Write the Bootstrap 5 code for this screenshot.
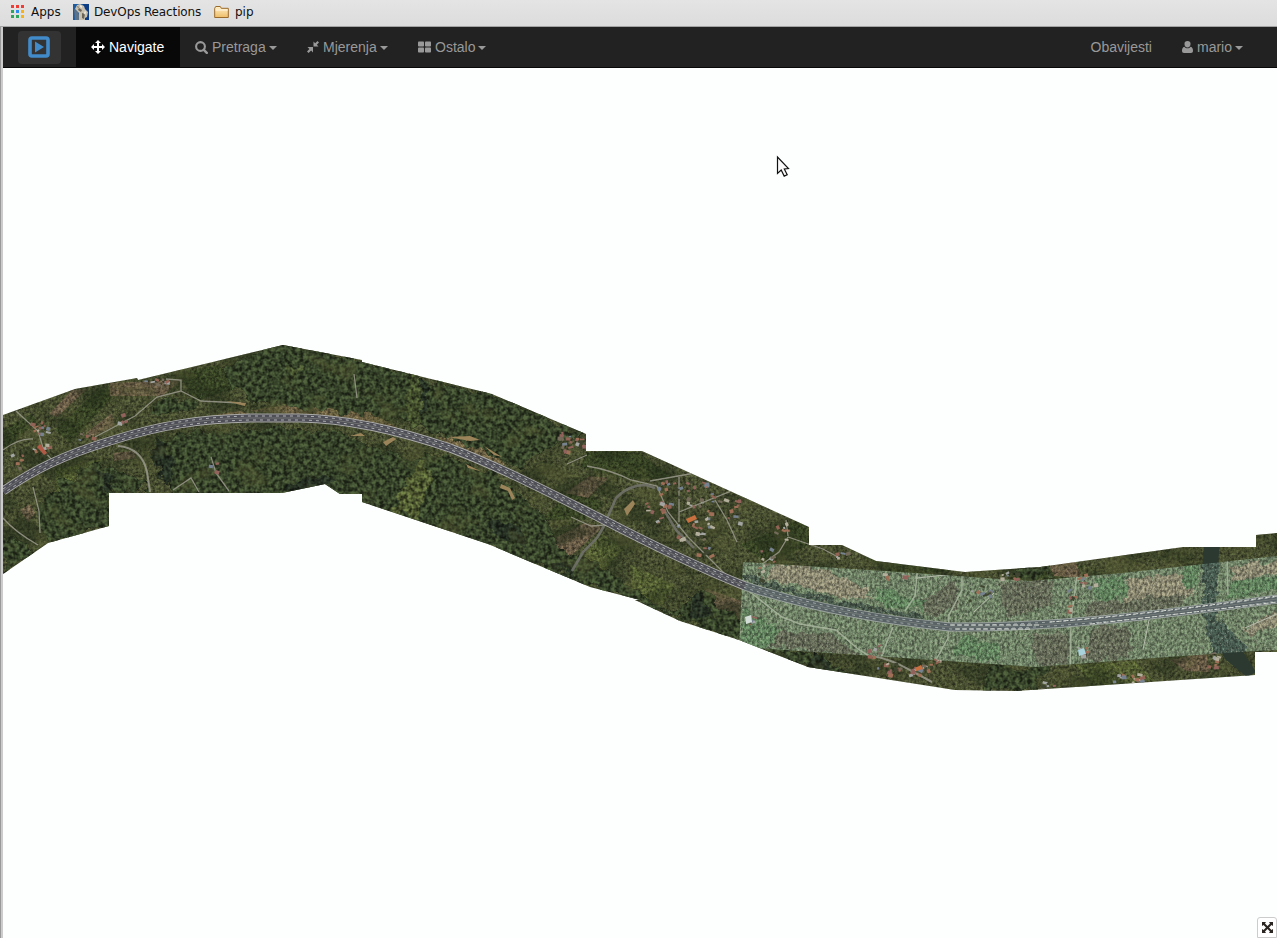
<!DOCTYPE html>
<html lang="hr">
<head>
<meta charset="utf-8">
<meta name="viewport" content="width=device-width, initial-scale=1">
<title>Navigate</title>
<link rel="stylesheet" href="https://cdn.jsdelivr.net/npm/bootstrap@5.3.0/dist/css/bootstrap.min.css">
<style>
body{font-family:"Liberation Sans",Arial,sans-serif;font-size:14px;line-height:20px;background:#fdfefe}
svg{display:block;flex:none}
.bookmarks{height:27px;background:linear-gradient(#e4e4e4,#dcdcdc);border-bottom:1px solid #a3a3a3;font:12px/24px "DejaVu Sans",sans-serif;color:#111;padding-left:10px}
.bookmarks a{color:inherit;text-decoration:none;height:24px}
.bm-apps{width:63px;gap:7px}
.bm-devops{width:141px;gap:5px;letter-spacing:-.13px}
.bm-pip{gap:5px}
.page-frame{padding-left:3px;background:linear-gradient(90deg,#999 1px,#ccc 1px)}
.topbar{height:41px;background:#222;border-bottom:1px solid #080808;padding:0 19px 0 15px}
.topbar .nav-link{height:40px;padding:0 15px;color:#999;gap:4px}
.topbar .nav-link.active{background:#080808;color:#fff;width:104px}
.topbar .w-search{width:112px}
.topbar .w-measure{width:111px}
.brand-box{width:43px;height:33px;background:#333;border-radius:4px;margin-right:15px;padding-right:1px}
.tri{border:4px solid transparent;border-top-color:currentColor;border-bottom:0;margin:2px 0 0 -1px}
.map-wrap{height:870px;background:#fdfefe}
.full-btn{right:0;bottom:0;width:20px;height:21px;border:1px solid #ccc;border-radius:3px 3px 0 0;background:#fff}
</style>
</head>
<body class="vh-100 overflow-hidden d-flex flex-column">
<div class="bookmarks d-flex">
  <a href="#" class="bm-apps d-flex align-items-center"><svg width="14" height="14"><path fill="#ef3e36" d="M1 0h3v3H1zM6 0h3v3H6zM11 0h3v3h-3z"/><path fill="#2da55d" d="M1 5h3v3H1zM1 10h3v3H1zM6 10h3v3H6z"/><path fill="#2b8cf0" d="M6 5h3v3H6z"/><path fill="#f6b21b" d="M11 5h3v3h-3zM11 10h3v3h-3z"/></svg>Apps</a>
  <a href="#" class="bm-devops d-flex align-items-center"><svg width="16" height="16"><path fill="#1c5b9f" d="M0 0h16v16H0z"/><path fill="#0d3d83" d="M10 0h6v16h-4z"/><path fill="#5c7286" d="M1 5l4 3 3 8H2z"/><path fill="#c8c0ae" d="M4 1l3-1 4 2 1 3 3 3-1 5-2 1v2H6V9L2 5z"/><path fill="#6b6558" d="M6 4l3 2-1 2-3-2zM9 9l3 1-1 5-2-1zM4 2l2 1-1 1z"/><path fill="#eee9da" d="M7 1l2 1v2L7 3zM12 7l1 1-1 3-1-2z"/></svg>DevOps Reactions</a>
  <a href="#" class="bm-pip d-flex align-items-center"><svg width="16" height="14"><defs><linearGradient id="fold" x2="0" y2="1"><stop stop-color="#fff0ca"/><stop offset="1" stop-color="#eebd68"/></linearGradient></defs><path d="M.7 12V3.300l1-1.800h4.600l1 1.800h7v9.200H.7z" fill="url(#fold)" stroke="#9a6a2b"/><path d="M1.500 5h12.300" stroke="#fff8e5"/></svg>pip</a>
</div>
<div class="page-frame flex-grow-1">
<nav class="topbar d-flex align-items-center">
  <a href="#" class="brand-box d-flex align-items-center justify-content-center"><svg width="22" height="22"><rect x="2" y="2" width="18" height="18" rx="2" fill="none" stroke="#428bca" stroke-width="3.600"/><path fill="#428bca" d="M7 5.500v11l9-5.500z"/></svg></a>
  <a href="#" class="nav-link active d-flex align-items-center"><svg width="14" height="14"><path fill="currentColor" d="M7 0l3 3H8v3h3V4l3 3-3 3V8H8v3h2l-3 3-3-3h2V8H3v2L0 7l3-3v2h3V3H4z"/></svg>Navigate</a>
  <a href="#" class="nav-link w-search d-flex align-items-center"><svg width="13" height="13"><circle cx="5.500" cy="5.500" r="4.400" fill="none" stroke="currentColor" stroke-width="2.100"/><path stroke="currentColor" stroke-width="2.400" stroke-linecap="round" d="M8.800 8.800l3 3"/></svg>Pretraga<span class="tri"></span></a>
  <a href="#" class="nav-link w-measure d-flex align-items-center"><svg width="12" height="12"><path fill="currentColor" d="M6 6H.5l1.900 1.900L0 10.400 1.600 12l2.500-2.400L6 11.500zM6.500 5.500V.5l1.700 1.700L10.500 0 12 1.500 9.800 3.800l1.700 1.700z"/></svg>Mjerenja<span class="tri"></span></a>
  <a href="#" class="nav-link d-flex align-items-center"><svg width="13" height="12"><g fill="currentColor"><rect y=".5" width="6" height="5" rx=".8"/><rect x="7" y=".5" width="6" height="5" rx=".8"/><rect y="6.500" width="6" height="5" rx=".8"/><rect x="7" y="6.500" width="6" height="5" rx=".8"/></g></svg>Ostalo<span class="tri"></span></a>
  <a href="#" class="nav-link d-flex align-items-center ms-auto">Obavijesti</a>
  <a href="#" class="nav-link d-flex align-items-center"><svg width="11" height="12"><path fill="currentColor" d="M5.500 0a3 3 0 013 3.200c0 1.800-1.200 3.300-3 3.300s-3-1.500-3-3.300A3 3 0 015.500 0zM2.400 5.700c1.700 2.100 4.500 2.100 6.200 0C10.400 6 11 8 11 9.800 11 11.200 10.200 12 9 12H2C.8 12 0 11.200 0 9.800 0 8 .6 6 2.400 5.700z"/></svg>mario<span class="tri"></span></a>
</nav>
<main class="map-wrap position-relative">
<svg width="1274" height="870" viewBox="3 68 1274 870">
<defs>
<clipPath id="land"><path d="M3 415L75 389 137 378 138 380 283 345 362 360 362 362 492 394 586 434V451H642L809 527V545H842L876 561 965 572 1040 567 1183 547H1256V535L1277 533V652H1255V675L1015 691 955 690 808 667 739 640 680 621 635 600 640 600 590 587 488 544 362 502V494H340L325 484 282 493H109V526L48 543 3 574Z"/></clipPath>
<clipPath id="strip"><path d="M743 562L900 572 1030 581 1122 573 1277 556V650L1255 651 1140 659 1035 667 739 647Z"/></clipPath>
<filter id="grain" x="0" y="0" width="1" height="1" color-interpolation-filters="sRGB"><feTurbulence type="fractalNoise" baseFrequency=".36" numOctaves="3" seed="4"/><feColorMatrix values="1.700 .3 0 0 -.5 1.700 .3 0 0 -.5 1.700 .3 0 0 -.5 0 0 0 0 1" result="n"/><feComposite in="SourceGraphic" in2="n" operator="arithmetic" k1=".9" k2=".6"/></filter>
<filter id="stripgrain" x="0" y="0" width="1" height="1" color-interpolation-filters="sRGB"><feTurbulence type="fractalNoise" baseFrequency=".09" numOctaves="3" seed="9" result="w"/><feDisplacementMap in="SourceGraphic" in2="w" scale="14" xChannelSelector="R" yChannelSelector="G" result="s"/><feTurbulence type="fractalNoise" baseFrequency=".4 .3" numOctaves="4" seed="14"/><feColorMatrix values="2 .3 0 0 -.65 2 .3 0 0 -.65 2 .3 0 0 -.65 0 0 0 0 1" result="n"/><feComposite in="s" in2="n" operator="arithmetic" k1=".65" k2=".66"/></filter>
<filter id="trees" x="-.05" y="-.05" width="1.100" height="1.100" color-interpolation-filters="sRGB"><feTurbulence type="fractalNoise" baseFrequency=".08" numOctaves="2" seed="9" result="w"/><feDisplacementMap in="SourceGraphic" in2="w" scale="17" xChannelSelector="R" yChannelSelector="G" result="s"/><feTurbulence type="fractalNoise" baseFrequency=".25" numOctaves="4" seed="12"/><feColorMatrix values="2.200 0 0 0 -.6 2.200 0 0 0 -.6 2.200 0 0 0 -.6 0 0 0 0 1" result="n"/><feComposite in="s" in2="n" operator="arithmetic" k1="1.100" k2=".5" result="c"/><feComposite in="c" in2="s" operator="in"/></filter>
<filter id="patches" x="0" y="0" width="1" height="1" color-interpolation-filters="sRGB"><feTurbulence type="fractalNoise" baseFrequency=".025 .04" numOctaves="3" seed="21"/><feColorMatrix values="0 0 0 0 .12 0 0 0 0 .16 0 0 0 0 .09 4 0 0 0 -1.800"/></filter>
<filter id="glades" x="0" y="0" width="1" height="1" color-interpolation-filters="sRGB"><feTurbulence type="fractalNoise" baseFrequency=".03 .045" numOctaves="4" seed="44"/><feColorMatrix values="0 0 0 0 .35 0 0 0 0 .37 0 0 0 0 .21 5 0 0 0 -2.700"/></filter>
<filter id="speck" x="0" y="0" width="1" height="1" color-interpolation-filters="sRGB"><feTurbulence type="fractalNoise" baseFrequency=".45" numOctaves="2" seed="31"/><feColorMatrix values="0 0 0 0 .78 0 0 0 0 .77 0 0 0 0 .69 6 0 0 0 -3.700"/></filter>
<path id="hw" d="M3 491C35 469 64 455 110 441 160 425 200 419 250 418H300C350 419 400 431 450 448 500 467 550 493 600 518 650 544 700 568 745 586 800 604 870 619 950 627 1050 628 1150 616 1277 599"/>
</defs>
<g clip-path="url(#land)">
<g filter="url(#grain)">
<path fill="#444a2e" d="M0 330H1280V700H0z"/>
<g fill="#354023"><path d="M55 430L98 389 118 391 70 443zM179 372l40-7 20 22-45 15zM3 430l28-16 6 7-34 31zM586 452h52l35 26-47 1-45-12zM740 545l66-28 4 28-42 18zM860 556l90 15-50 5zM1005 578l80-13-20 14zM540 520l35-32 30 15-20 17z"/></g>
<g fill="#625642"><path d="M49 414l23-24 15-1-30 28zM86 433l26-20 2 13-20 10zM110 383l72-3-20 16h-52zM565 493l25-17 18 2-20 20zM540 545l45-22 18 4-30 27-27 10zM705 588l36 13-3 31-17-5zM1050 566l25-6 7 18-28-2zM1170 660l36-8 4 20-24-1zM113 453l21-2 2 7-22 3zM20 510l10-6 5 9-7 9z"/></g>
<g fill="#685d40"><path d="M248 411l52-8 70 9 35 20-40-9-60-8zM436 437l47 3 23 26-40-14zM160 423l80-12 10 3-75 13z"/></g>
<g fill="#4f5930"><path d="M55 470l46-11-5 26-40 8zM630 565l45 20-13 20-30-10zM1075 665l60-4 20 20-60 5zM570 575l30-42 24 15-34 39zM1045 585l70-8-8 20z"/></g>
</g>
<path filter="url(#patches)" opacity=".5" d="M3 345H1277V692H3z"/>
<g filter="url(#trees)">
<g fill="#333f27"><path d="M220 367L285 342 420 375 418 425 360 413 250 402zM155 400l45-2-8 12-37 5zM155 442l40-10 85-3 55 3 95 35-30 42-80-15-30 5-112 12zM355 502l70-50 70 20 50 45 12 30 40 15 10 30-120-45z"/><path d="M417 378l75 17 92 39-38 15-25 20-65-30-42-16zM95 463l24 4 32 22H109v37l-61 17-10-35 12-17zM3 530l30 20-30 30zM590 560l60 40 45 25-60-25-40-14zM672 613l32-24 36 32-2 20zM753 644l75 12 20 25-42-15zM990 666l58 1-12 24-56-1zM1010 572l40-6 2 10-25 4z"/></g>
<g fill="#242d21"><path d="M285 484l40-8 10 8-10 4-43 6zM93 466l25 13-10 14zM150 448l12-6 15 20-10 25zM417 377l13 8-6 32-7-12zM490 521l31 4 5 25-40-19zM553 562l18 1 1 12-18-9zM690 598l10-4 16 25-25-2zM810 650l20 10 3 15-24-9z"/></g>
<g fill="#4a542e"><path d="M397 501l26-44 9 22-16 39-27-8z"/></g><path fill="#3f4a2a" d="M410 370l10-1 1 55-8 3-8-8zM285 366l20 2-10 8z"/>
</g>
<path filter="url(#glades)" opacity=".38" d="M3 345H1277V692H3z"/>
<!-- river on the east side -->
<path fill="#2b3931" d="M1204 540h16l-5 65 12 22 29 45-9 5-22-18-16-35-8-22z"/>
<g fill="none" stroke="#9b9a8c" stroke-width="1.300" opacity=".85">
<path d="M16 411l22 20 6 20 8 9M3 450q16-12 30-11M95 437l40-21 22-19 24-6V380l-15-1M181 391l20 10 40 2M173 490l18-12 8 14M211 457l5 16 13 18M3 518q12 14 35 27M33 487l6 24 1 22"/>
<path stroke-width="2" d="M118 446q24 2 29 26l3 20"/>
<path d="M587 455l-20 9M587 466q24 4 44 14l26 6 11 26 20 25 22 22 20 20M571 517l20 9 15-1M650 481l45-8M679 477v45M679 512l60-24 12 5M715 500l12 20 10 22M788 537l35 12 15 8M788 537l-9 15-18 13M786 520l2 16M354 374l3 24"/>
<path stroke="#74756e" stroke-width="2.600" d="M604 526l-7 12-14 14-11 19M606 521l10-23q12-13 30-13l9 3M664 510l12 20 18 18"/>
<path stroke-width="2" d="M869 655q23 5 35 12l28 15"/>
</g>
<g fill="#9c845a"><path d="M226 401l20 2-1 3zM448 437l22-1 10 4-10 1zM484 446l18 11-8-2zM383 442l10-5 3 2-10 7zM501 484l9 4 5 10-3 2-4-9-8-3zM624 509l9-9 2 4-8 12zM350 436l11-3 4 3zM466 464l14 7-12-3z"/></g>
<!-- newer survey strip laid over the base imagery -->
<g clip-path="url(#strip)">
<g filter="url(#stripgrain)">
<path fill="#6d8064" d="M725 545H1290V685H725z"/>
<path fill="#8a8770" d="M771 564l40 3 58 19-4 14-20-2-78-20zM825 590l18-13 28 20zM1130 579l53-6 16 20-56 15-20-8zM1232 567l55-6v8l-55 14zM1244 628l43-20v13l-38 16z"/>
<path fill="#636956" d="M770 629l65 7 25 20-87-10zM1000 583l50-1 5 23-50 14zM1030 635l40-3-2 32-30 2zM1086 605l100-12-3 14-99 11zM920 600l38-20-2 30-30 6zM1092 630l35-5 4 32-45 4z"/>
<path fill="#5f7f5b" d="M743 607l38 24-14 18h-25zM878 587l50 15-4 9-50-8zM1095 578l30-3v24l-27 3zM1183 566l15-2v23l-15 3zM1228 585l59-12v14l-59 11zM960 635l40 10-2 15-45-5z"/>
<path fill="#48584b" d="M743 572l60 20 70 15 50 9v5l-90-15-90-25z"/>
<path fill="#475a4f" d="M1203 535h17l-5 80 33 33-26 28-19-60z"/>
</g>
<path filter="url(#speck)" opacity=".42" d="M739 556H1277V670H739z"/>
<g fill="none" stroke="#a9b69f" stroke-width="1.500" opacity=".85"><path d="M750 592l32 25 18 7 36 6 22 19 14 9M962 575v15l-13 25-1 23-12 22M893 627l-12 30M1077 575l-6 45-1 60M917 573l-2 23-10 15M1227 550l1 45"/></g>
<path stroke="#b6bcac" d="M1149 620l-6 30M974 612l20-19M1245 628l32-14M917 578l38-4" fill="none"/>
</g>
<g id="houses"></g>
<use href="#hw" fill="none" stroke="#aaaaa8" stroke-width="9"/><use href="#hw" fill="none" stroke="#4e4f57" stroke-width="7.200"/>
<use href="#hw" fill="none" stroke="#7c7d7b" stroke-width=".8"/>
<g fill="none" stroke="#c9cacc" stroke-width=".8" stroke-dasharray="3 4"><use href="#hw" transform="translate(0 -2)"/><use href="#hw" transform="translate(1 2)" stroke-dashoffset="3"/></g>
<path fill="none" stroke="#78958a" stroke-width="9" opacity=".28" d="M745 586C800 604 870 619 950 627 1050 628 1150 616 1277 599"/>
<path fill="none" stroke="#d8ddd5" stroke-width="1" stroke-dasharray="5 2" d="M950 625h90M955 629h75M1050 622Q1150 614 1277 596M1090 624Q1180 614 1277 602"/>
</g>
<path d="M777.500 157v16.500l3.700-3.400 3 6 3-1.400-2.900-5.700 4.200-.5z" fill="#fafafa" stroke="#111" stroke-width="1.200"/>
</svg>
<button class="full-btn position-absolute p-0 d-flex align-items-center justify-content-center" aria-label="Fullscreen"><svg width="11" height="11"><path fill="#2b2522" d="M0 0h4L3 1.500l2.500 2.500L8 1.500 7 0h4v4L9.500 3 7 5.500 9.500 8 11 7v4H7l1-1.500L5.500 7 3 9.500 4 11H0V7l1.500 1L4 5.500 1.500 3 0 4z"/></svg></button>
</main>
</div>
<script>
// villages: [centre x, centre y, spread x, spread y, number of roofs]
const groups=[[41,426,10,7,12],[40,451,7,8,8],[15,461,7,7,7],[85,435,8,4,5],[121,418,5,4,4],[153,381,12,3,7],[569,441,14,9,20],[212,467,4,5,4],[683,493,30,14,32],[713,511,28,15,24],[690,531,13,10,14],[657,509,14,14,12],[703,549,8,7,6],[780,532,6,9,8],[766,556,8,9,9],[840,555,7,6,5],[762,573,5,7,5],[750,617,4,6,6],[891,576,14,4,7],[875,651,10,5,7],[898,669,22,6,19],[925,665,14,7,9],[981,592,13,8,10],[1008,575,8,4,7],[1083,580,12,6,8],[1069,600,4,12,7],[1081,651,5,5,5],[1125,677,16,6,17],[1045,683,9,4,6],[1212,662,6,9,8]];
const tones=["#936456","#a2a5a2","#746b5b","#a06f58","#778291","#b4ae9c","#91635c","#3e4430"];
let seed=17;const rnd=()=>(seed=(seed*16807)%2147483647)/2147483647;
let out="";
for(const [x,y,sx,sy,n] of groups)for(let i=0;i<n;i++){
  const px=(x+(rnd()*2-1)*sx).toFixed(1),py=(y+(rnd()*2-1)*sy).toFixed(1);
  out+=`<rect x="${px}" y="${py}" width="${(2+rnd()*3.5).toFixed(1)}" height="${(1.5+rnd()*2.5).toFixed(1)}" fill="${tones[Math.floor(rnd()*8)]}" transform="rotate(${Math.floor(rnd()*60-30)} ${px} ${py})"/>`;
}
document.getElementById("houses").innerHTML=out+'<path fill="#c8703f" d="M686 519l9-4 2 4-9 4zM915 668l6-3 2 4-7 2z"/><path fill="#b15b47" d="M37 447l3-3 7 9-3 2z"/><path fill="#d4ded9" d="M745 617l6-2 1 7-6 2z"/><path fill="#a9d3dc" d="M1078 650l6-2 2 6-7 2z"/>';
</script>
<script src="https://cdn.jsdelivr.net/npm/bootstrap@5.3.0/dist/js/bootstrap.bundle.min.js"></script>
</body>
</html>
